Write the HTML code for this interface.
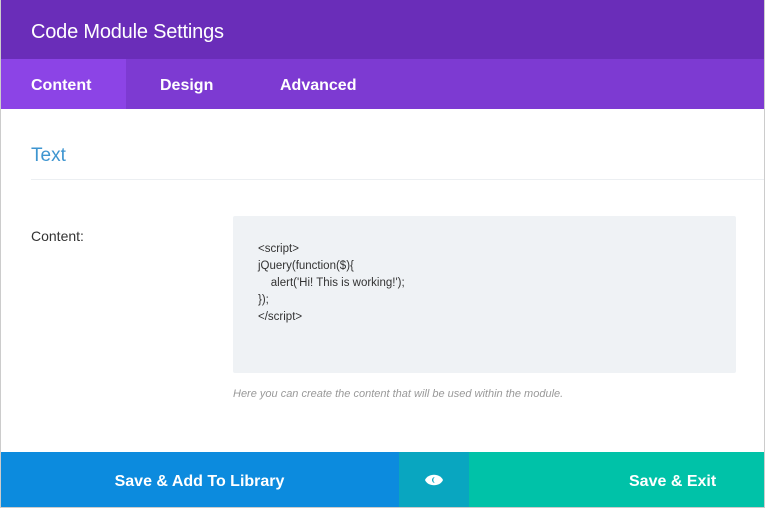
<!DOCTYPE html>
<html><head><style>
*{margin:0;padding:0;box-sizing:border-box}
body{width:765px;height:508px;overflow:hidden;background:#fff;font-family:"Liberation Sans",sans-serif;position:relative}
.frame{position:absolute;inset:0;border:1px solid #ccc;border-top:none}
.hdr{position:absolute;left:0;top:0;width:765px;height:59px;background:#6a2db9;color:#fff;font-size:20px;padding:21px 0 0 31px;letter-spacing:-0.2px}
.tabs{position:absolute;left:0;top:59px;width:765px;height:50px;background:#7d3ad2}
.tab{position:absolute;top:2px;height:50px;line-height:50px;color:#fff;font-size:16px;font-weight:bold}
.t1{left:0;top:0;width:126px;background:#8c44e6;padding-left:31px;padding-top:2px}
.txt{position:absolute;left:31px;top:145px;color:#3e95d0;font-size:19px}
.line{position:absolute;left:31px;top:179px;width:734px;height:1px;background:#eceff2}
.lbl{position:absolute;left:31px;top:228px;font-size:14px;color:#333}
.ta{position:absolute;left:233px;top:216px;width:503px;height:157px;background:#eff2f5;border-radius:2px;padding:25px 0 0 25px;font-size:11.5px;line-height:17px;color:#333;white-space:pre}
.help{position:absolute;left:233px;top:388px;font-size:11px;font-style:italic;color:#999}
.f{position:absolute;top:452px;height:55px;line-height:59px;color:#fff;font-weight:bold;font-size:16px;text-align:center}
.f1{left:0;width:399px;background:#0c8bde}
.f2{left:399px;width:70px;background:#09a6c0}
.f3{left:469px;width:296px;background:#00c2a8;padding-left:160px;text-align:left}
</style></head><body>
<div class="hdr">Code Module Settings</div>
<div class="tabs">
<div class="tab t1">Content</div>
<div class="tab" style="left:160px">Design</div>
<div class="tab" style="left:280px">Advanced</div>
</div>
<div class="txt">Text</div>
<div class="line"></div>
<div class="lbl">Content:</div>
<div class="ta">&lt;script&gt;
jQuery(function($){
    alert('Hi! This is working!');
});
&lt;/script&gt;</div>
<div class="help">Here you can create the content that will be used within the module.</div>
<div class="f f1">Save &amp; Add To Library</div>
<div class="f f2"><svg width="22" height="16" viewBox="0 0 22 16" style="vertical-align:middle;margin-top:-4px"><path d="M2 8C5 1 17 1 20 8C17 15 5 15 2 8Z" fill="#fff"/><path d="M12 5a3 3 0 1 0 0 6a3.5 3.5 0 0 1 0-6Z" fill="#09a6c0"/></svg></div>
<div class="f f3">Save &amp; Exit</div>
<div class="frame"></div>
</body></html>
